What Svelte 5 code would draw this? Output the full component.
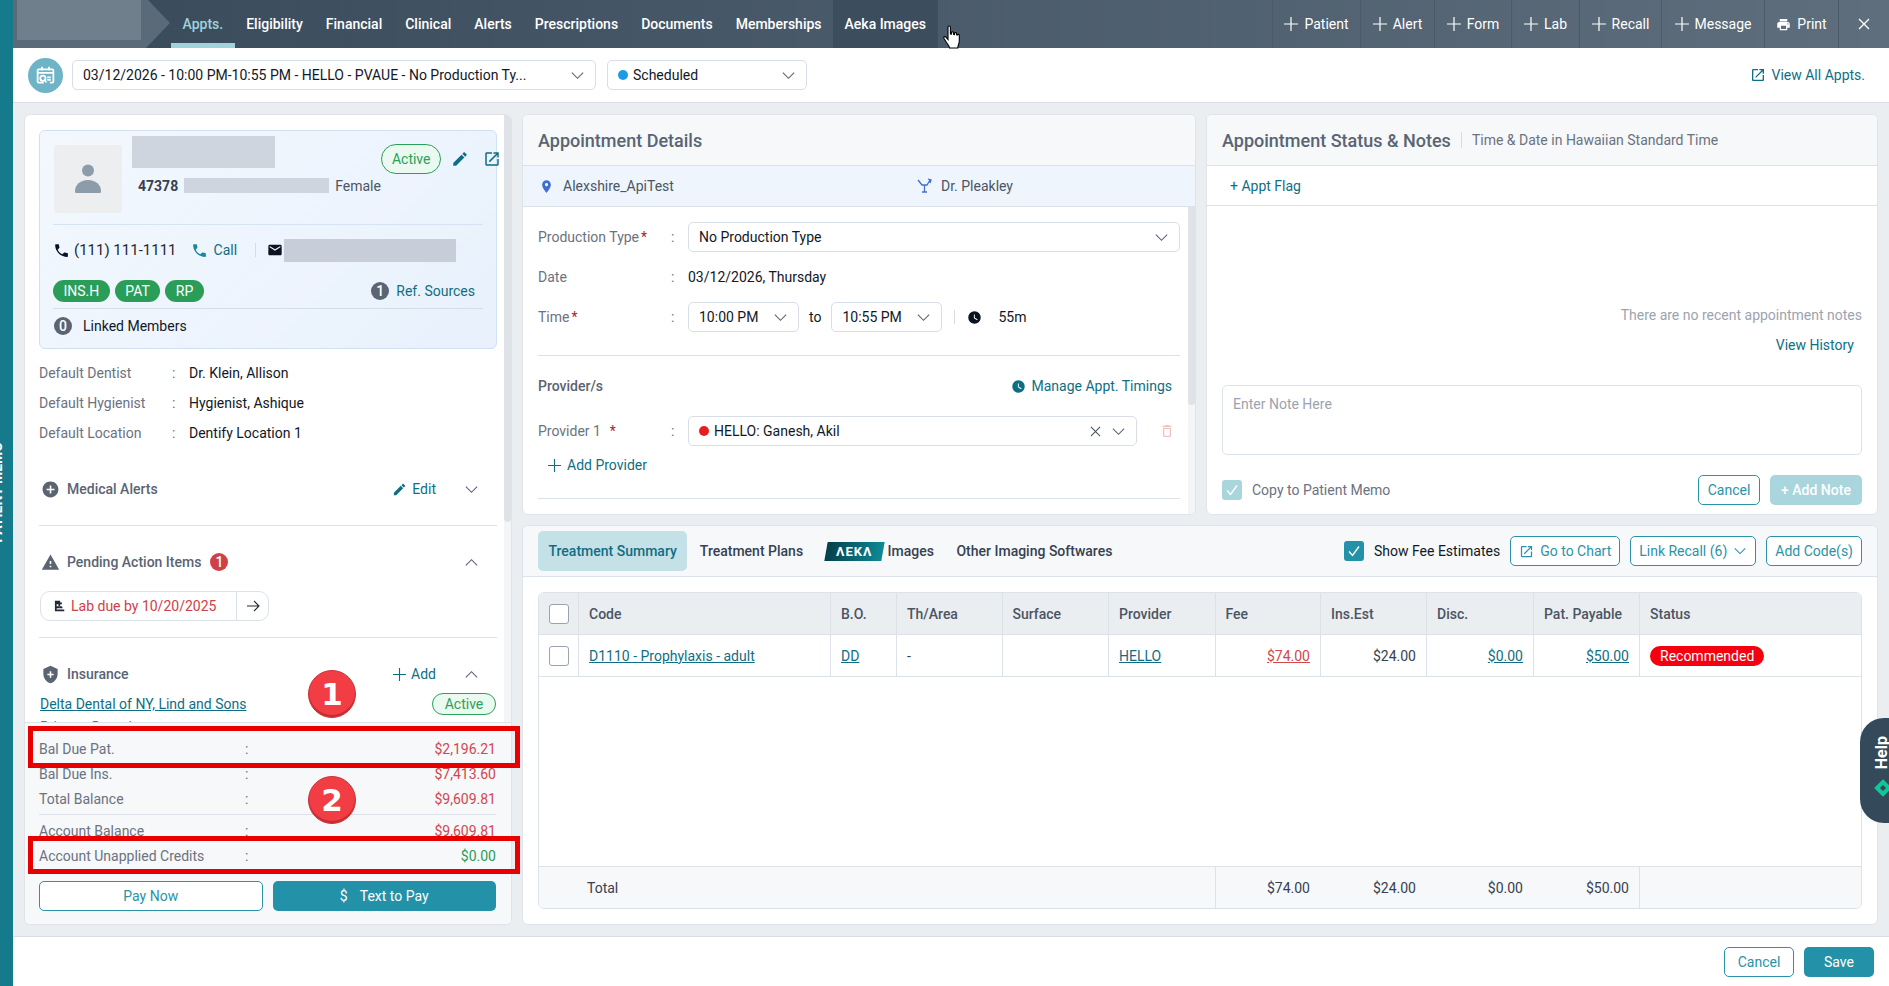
<script>
	const icons = {
		phone: 'M6.62 10.79c1.44 2.83 3.76 5.14 6.59 6.59l2.2-2.2c.27-.27.67-.36 1.02-.24 1.12.37 2.33.57 3.57.57.55 0 1 .45 1 1V20c0 .55-.45 1-1 1-9.39 0-17-7.61-17-17 0-.55.45-1 1-1h3.5c.55 0 1 .45 1 1 0 1.25.2 2.45.57 3.57.11.35.03.74-.25 1.02l-2.2 2.2z',
		edit: 'M3 17.25V21h3.75L17.81 9.94l-3.75-3.75L3 17.25zM20.71 7.04c.39-.39.39-1.02 0-1.41l-2.34-2.34c-.39-.39-1.02-.39-1.41 0l-1.83 1.83 3.75 3.75 1.83-1.83z',
		open: 'M19 19H5V5h7V3H5c-1.11 0-2 .9-2 2v14c0 1.1.89 2 2 2h14c1.1 0 2-.9 2-2v-7h-2v7zM14 3v2h3.59l-9.83 9.83 1.41 1.41L19 6.41V10h2V3h-7z',
		mail: 'M20 4H4c-1.1 0-1.99.9-1.99 2L2 18c0 1.1.9 2 2 2h16c1.1 0 2-.9 2-2V6c0-1.1-.9-2-2-2zm0 4l-8 5-8-5V6l8 5 8-5v2z',
		addCircle: 'M12 2C6.48 2 2 6.48 2 12s4.48 10 10 10 10-4.48 10-10S17.52 2 12 2zm5 11h-4v4h-2v-4H7v-2h4V7h2v4h4v2z',
		warning: 'M1 21h22L12 2 1 21zm12-3h-2v-2h2v2zm0-4h-2v-4h2v4z',
		shield: 'M12 1L3 5v6c0 5.55 3.84 10.74 9 12 5.16-1.26 9-6.45 9-12V5l-9-4zm4 12h-3v3h-2v-3H8v-2h3V8h2v3h3v2z',
		place: 'M12 2C8.13 2 5 5.13 5 9c0 5.25 7 13 7 13s7-7.75 7-13c0-3.87-3.13-7-7-7zm0 9.5c-1.38 0-2.5-1.12-2.5-2.5s1.12-2.5 2.5-2.5 2.5 1.12 2.5 2.5-1.12 2.5-2.5 2.5z',
		print: 'M19 8H5c-1.66 0-3 1.34-3 3v6h4v4h12v-4h4v-6c0-1.66-1.34-3-3-3zm-3 11H8v-5h8v5zm3-7c-.55 0-1-.45-1-1s.45-1 1-1 1 .45 1 1-.45 1-1 1zm-1-9H6v4h12V3z',
		clock: 'M12 2a10 10 0 1 0 0 20 10 10 0 0 0 0-20zm4.2 14.2L11 13V7h1.5v5.2l4.5 2.7-.8 1.3z',
		trash: 'M6 19c0 1.1.9 2 2 2h8c1.1 0 2-.9 2-2V7H6v12zM8 9h8v10H8V9zm7.5-5l-1-1h-5l-1 1H5v2h14V4z',
		lab: 'M5 3h9v3h3v3h-3v3h-3V9H8v3.5h7c1.5 0 3 .6 3 2.5v1H8v2h13v3H5V3z'
	};

	const navItems = ['Appts.', 'Eligibility', 'Financial', 'Clinical', 'Alerts', 'Prescriptions', 'Documents', 'Memberships', 'Aeka Images'];
	const tools = [
		{ label: 'Patient', w: 88 },
		{ label: 'Alert', w: 74 },
		{ label: 'Form', w: 77 },
		{ label: 'Lab', w: 68 },
		{ label: 'Recall', w: 82 },
		{ label: 'Message', w: 103 }
	];
	const defaults = [
		['Default Dentist', 'Dr. Klein, Allison'],
		['Default Hygienist', 'Hygienist, Ashique'],
		['Default Location', 'Dentify Location 1']
	];
	const heads = ['Code', 'B.O.', 'Th/Area', 'Surface', 'Provider', 'Fee', 'Ins.Est', 'Disc.', 'Pat. Payable', 'Status'];
</script>

{#snippet icon(d, size, color)}
	<svg class="ic" width={size} height={size} viewBox="0 0 24 24" fill={color}><path {d} /></svg>
{/snippet}

{#snippet chevron(size, color, up = false)}
	<svg class="ic" width={size} height={size} viewBox="0 0 16 16" fill="none" stroke={color} stroke-width="1.2">
		<path d={up ? 'M2 11l6-6 6 6' : 'M2 5l6 6 6-6'} />
	</svg>
{/snippet}

{#snippet plus(size, color)}
	<svg class="ic" width={size} height={size} viewBox="0 0 14 14" stroke={color} stroke-width="1.2"><path d="M7 0v14M0 7h14" /></svg>
{/snippet}

{#snippet check(color)}
	<svg width="20" height="20" viewBox="0 0 20 20" fill="none" stroke={color} stroke-width="1.4"><path d="M5 10.5l3.5 4L15 5.5" /></svg>
{/snippet}

<div class="app">
	<aside class="rail"><span class="rail-text">PATIENT MEMO</span></aside>

	<div class="page">
		<header class="topbar">
			<div class="brand"><div class="redact-brand"></div></div>
			<nav class="nav">
				{#each navItems as item, i}
					<span class="nav-item" class:active={i === 0} class:hover={i === 8}>{item}</span>
				{/each}
			</nav>
			<div class="tools">
				{#each tools as t}
					<span class="tool" style="width:{t.w}px">{@render plus(14, '#fff')}{t.label}</span>
				{/each}
				<span class="tool" style="width:74px">{@render icon(icons.print, 15, '#fff')}Print</span>
				<span class="tool" style="width:51px">
					<svg width="12" height="12" viewBox="0 0 12 12" stroke="#fff" stroke-width="1.3"><path d="M1 1l10 10M11 1L1 11" /></svg>
				</span>
			</div>
		</header>

		<div class="subbar">
			<div class="cal">
				<svg width="21" height="21" viewBox="0 0 24 24" fill="none" stroke="#fff" stroke-width="2">
					<path d="M10 20H4a1 1 0 0 1-1-1V6a1 1 0 0 1 1-1h16a1 1 0 0 1 1 1v13a1 1 0 0 1-1 1h-3" />
					<path d="M3 9h18M8 2v4M16 2v4M14 14h4M14 17h4" />
					<circle cx="9" cy="15" r="3" />
					<path d="M11 17l2 3" />
				</svg>
			</div>
			<div class="select appt-select">
				<span>03/12/2026 - 10:00 PM-10:55 PM - HELLO - PVAUE - No Production Ty...</span>
				{@render chevron(15, '#5b6472')}
			</div>
			<div class="select status-select">
				<span><i class="dot blue"></i>Scheduled</span>
				{@render chevron(15, '#5b6472')}
			</div>
			<a class="view-all">{@render icon(icons.open, 16, '#0f6e84')}View All Appts.</a>
		</div>

		<main class="main">
			<section class="panel left">
				<div class="left-top">
					<div class="left-content">
						<div class="card">
							<div class="card-head">
								<div class="avatar">
									<svg width="26" height="30" viewBox="0 0 26 30" fill="#8d9cab">
										<circle cx="13" cy="6.5" r="6" />
										<path d="M1.5 29c-1.5 0-1.5-1-1.5-2 0-6 5-11 13-11s13 5 13 11c0 1 0 2-1.5 2z" />
									</svg>
								</div>
								<div class="who">
									<div class="redact name-r"></div>
									<div class="id-row">
										<b>47378</b>
										<div class="redact id-r"></div>
										<span class="muted-dark">Female</span>
									</div>
								</div>
								<div class="head-actions">
									<span class="pill-active big">Active</span>
									{@render icon(icons.edit, 18, '#0f6e84')}
									{@render icon(icons.open, 18, '#0f6e84')}
								</div>
							</div>
							<div class="phone-row">
								{@render icon(icons.phone, 17, '#0b1220')}
								<span class="phone">(111) 111-1111</span>
								{@render icon(icons.phone, 17, '#1a86a0')}
								<a class="call">Call</a>
								<span class="vsep"></span>
								{@render icon(icons.mail, 16, '#0b1220')}
								<div class="redact mail-r"></div>
							</div>
							<div class="chip-row">
								<span class="chip">INS.H</span>
								<span class="chip">PAT</span>
								<span class="chip">RP</span>
								<span class="ref"><i class="count">1</i><a>Ref. Sources</a></span>
							</div>
							<div class="linked"><i class="count">0</i><span>Linked Members</span></div>
						</div>

						<div class="defaults">
							{#each defaults as [label, value]}
								<span class="lbl">{label}</span><span class="lbl">:</span><span class="val">{value}</span>
							{/each}
						</div>

						<div class="sec-row first">
							{@render icon(icons.addCircle, 19, '#5a6472')}
							<span class="sec-title">Medical Alerts</span>
							<a class="sec-action">{@render icon(icons.edit, 15, '#0f6e84')}Edit</a>
							{@render chevron(15, '#5a6472')}
						</div>
						<hr class="sec-rule" />

						<div class="sec-row">
							{@render icon(icons.warning, 19, '#5a6472')}
							<span class="sec-title">Pending Action Items</span>
							<i class="count red">1</i>
							<span class="sec-action"></span>
							{@render chevron(15, '#5a6472', true)}
						</div>
						<div class="lab-chip">
							<span class="lab-text">{@render icon(icons.lab, 14, '#1f2937')}Lab due by 10/20/2025</span>
							<span class="lab-go">
								<svg width="14" height="12" viewBox="0 0 14 12" fill="none" stroke="#1f2937" stroke-width="1.1"><path d="M1 6h12M8 1l5 5-5 5" /></svg>
							</span>
						</div>
						<hr class="sec-rule lab-rule" />

						<div class="sec-row">
							{@render icon(icons.shield, 19, '#5a6472')}
							<span class="sec-title">Insurance</span>
							<a class="sec-action">{@render plus(13, '#0f6e84')}Add</a>
							{@render chevron(15, '#5a6472', true)}
						</div>
						<div class="ins-row">
							<a class="ulink">Delta Dental of NY, Lind and Sons</a>
							<span class="pill-active">Active</span>
						</div>
						<div class="clipped">Primary Dental</div>
					</div>
					<div class="scroll"><div class="thumb"></div></div>
				</div>

				<div class="left-foot">
					<div class="bal"><span>Bal Due Pat.</span><span>:</span><span class="red-v">$2,196.21</span></div>
					<div class="bal"><span>Bal Due Ins.</span><span>:</span><span class="red-v">$7,413.60</span></div>
					<div class="bal"><span>Total Balance</span><span>:</span><span class="red-v">$9,609.81</span></div>
					<hr class="foot-rule" />
					<div class="bal"><span>Account Balance</span><span>:</span><span class="red-v">$9,609.81</span></div>
					<div class="bal"><span>Account Unapplied Credits</span><span>:</span><span class="green-v">$0.00</span></div>
					<div class="pay-row">
						<button class="btn outline">Pay Now</button>
						<button class="btn solid"><span class="dollar">$</span>Text to Pay</button>
					</div>
				</div>
			</section>

			<div class="right-col">
				<div class="upper">
					<section class="panel details">
						<div class="panel-head"><h2>Appointment Details</h2></div>
						<div class="loc-row">
							<span class="loc">{@render icon(icons.place, 15, '#3f6fd1')}Alexshire_ApiTest</span>
							<span class="doc">
								<svg class="ic" width="16" height="16" viewBox="0 0 16 16" fill="none" stroke="#3f6fd1" stroke-width="1.3"><path d="M1 2l4 5h5l3-5M7.5 7v7M5 14h5M11 1l3 1-1 3" /></svg>
								Dr. Pleakley
							</span>
						</div>
						<div class="details-body">
							<div class="details-form">
								<div class="form-row">
									<span class="lbl">Production Type<em>*</em></span><span class="lbl">:</span>
									<div class="select grow"><span>No Production Type</span>{@render chevron(15, '#5b6472')}</div>
								</div>
								<div class="form-row">
									<span class="lbl">Date</span><span class="lbl">:</span>
									<span class="val">03/12/2026, Thursday</span>
								</div>
								<div class="form-row">
									<span class="lbl">Time<em>*</em></span><span class="lbl">:</span>
									<div class="time-group">
										<div class="select time"><span>10:00 PM</span>{@render chevron(15, '#5b6472')}</div>
										<span class="val">to</span>
										<div class="select time"><span>10:55 PM</span>{@render chevron(15, '#5b6472')}</div>
										<span class="vsep"></span>
										{@render icon(icons.clock, 15, '#0b1220')}
										<span class="val dur">55m</span>
									</div>
								</div>
								<hr class="sec-rule time-rule" />
								<div class="prov-head">
									<span class="prov-title">Provider/s</span>
									<a class="manage">{@render icon(icons.clock, 15, '#0f6e84')}Manage Appt. Timings</a>
								</div>
								<div class="form-row">
									<span class="lbl">Provider 1 &nbsp;<em>*</em></span><span class="lbl">:</span>
									<div class="select provider">
										<span><i class="dot redd"></i>HELLO: Ganesh, Akil</span>
										<span class="sel-end">
											<svg width="11" height="11" viewBox="0 0 12 12" stroke="#4b5563" stroke-width="1.2"><path d="M1 1l10 10M11 1L1 11" /></svg>
											{@render chevron(15, '#5b6472')}
										</span>
									</div>
									<span class="trash">{@render icon(icons.trash, 16, '#f3c2c2')}</span>
								</div>
								<a class="add-prov">{@render plus(13, '#0f6e84')}Add Provider</a>
								<hr class="sec-rule prov-rule" />
							</div>
							<div class="scroll"><div class="thumb small"></div></div>
						</div>
					</section>

					<section class="panel notes">
						<div class="panel-head">
							<h2>Appointment Status &amp; Notes</h2>
							<span class="tz">Time &amp; Date in Hawaiian Standard Time</span>
						</div>
						<div class="flag-row"><a>+ Appt Flag</a></div>
						<div class="notes-body">
							<p class="empty">There are no recent appointment notes</p>
							<a class="history">View History</a>
							<div class="note-box">Enter Note Here</div>
							<div class="note-foot">
								<span class="box light">{@render check('#fff')}</span>
								<span class="copy">Copy to Patient Memo</span>
								<button class="btn outline note-cancel">Cancel</button>
								<button class="btn faded">+ Add Note</button>
							</div>
						</div>
					</section>
				</div>

				<section class="panel treat">
					<div class="treat-head">
						<span class="tab on">Treatment Summary</span>
						<span class="tab">Treatment Plans</span>
						<span class="tab aeka"><span class="aeka-logo"><span>ΛEKΛ</span></span>Images</span>
						<span class="tab">Other Imaging Softwares</span>
						<div class="treat-tools">
							<span class="box solid-box">{@render check('#fff')}</span>
							<span class="fee-label">Show Fee Estimates</span>
							<button class="btn outline small-btn">{@render icon(icons.open, 15, '#2a93a8')}Go to Chart</button>
							<button class="btn outline small-btn">Link Recall (6){@render chevron(14, '#2a93a8')}</button>
							<button class="btn outline small-btn">Add Code(s)</button>
						</div>
					</div>

					<div class="table">
						<div class="tr th">
							<span class="cell"><i class="cb"></i></span>
							{#each heads as h}<span class="cell">{h}</span>{/each}
						</div>
						<div class="tr td">
							<span class="cell"><i class="cb"></i></span>
							<span class="cell"><a class="ulink">D1110 - Prophylaxis - adult</a></span>
							<span class="cell"><a class="ulink">DD</a></span>
							<span class="cell">-</span>
							<span class="cell"></span>
							<span class="cell"><a class="ulink">HELLO</a></span>
							<span class="cell num"><a class="ulink redlink">$74.00</a></span>
							<span class="cell num">$24.00</span>
							<span class="cell num"><a class="ulink">$0.00</a></span>
							<span class="cell num"><a class="ulink">$50.00</a></span>
							<span class="cell"><span class="rec">Recommended</span></span>
						</div>
						<div class="spacer"></div>
						<div class="tr tot">
							<span class="cell total-label">Total</span>
							<span class="cell num">$74.00</span>
							<span class="cell num nb">$24.00</span>
							<span class="cell num nb">$0.00</span>
							<span class="cell num nb">$50.00</span>
							<span class="cell"></span>
						</div>
					</div>
				</section>
			</div>
		</main>

		<footer class="footer">
			<button class="btn outline foot-btn">Cancel</button>
			<button class="btn solid foot-btn">Save</button>
		</footer>
	</div>

	<!-- annotations drawn over the screenshot -->
	<div class="mark box1"></div>
	<div class="mark box2"></div>
	<div class="badge b1">1</div>
	<div class="badge b2">2</div>

	<svg class="cursor" width="18" height="24" viewBox="0 0 18 24" fill="#fff" stroke="#000" stroke-width="1.1">
		<path d="M5 2c0-1.4 2.4-1.4 2.4 0v7l1 .1V7.7c0-1.2 2.1-1.2 2.1 0v1.6l1 .2V8.400c0-1.200 2.100-1.200 2.100 0v1.500l.8.200c0-1 1.900-1 1.900.3V16c0 3-1.500 4-1.500 7H6.500c0-2-1.500-3.500-3-5.500L1 13.500c-.8-1.500 1-2.500 2-1.300L5 14.500z" />
	</svg>

	<div class="help">
		<span class="help-text">Help</span>
		<svg class="help-mark" width="18" height="18" viewBox="0 0 18 18" fill="none" stroke="#10c79a" stroke-width="4"><path d="M9 3l6 6-6 6-6-6z" /></svg>
	</div>
</div>

<style>
	:global(body) {
		margin: 0;
		overflow: hidden;
		background: #fff;
	}

	.app {
		display: flex;
		position: relative;
		width: 1889px;
		height: 986px;
		overflow: hidden;
		font-family: Roboto, 'Liberation Sans', sans-serif;
		font-size: 14px;
		color: #1f2937;
	}

	a {
		color: #0f6e84;
	}

	hr {
		border: 0;
		margin: 0;
		height: 1px;
		background: #dde1e8;
	}

	.ic {
		flex: none;
		display: block;
	}

	.rail {
		position: relative;
		flex: none;
		width: 13px;
		background: #157a8c;
		overflow: hidden;
	}

	.rail-text {
		position: absolute;
		left: -11px;
		top: 442px;
		writing-mode: vertical-rl;
		transform: rotate(180deg);
		color: #fff;
		font-weight: 700;
		font-size: 14px;
		white-space: nowrap;
	}

	.page {
		flex: 1;
		min-width: 0;
		display: flex;
		flex-direction: column;
	}

	/* top bar */
	.topbar {
		flex: none;
		display: flex;
		height: 48px;
		background: linear-gradient(90deg, #38495a, #5e6e7d);
		color: #fff;
	}

	.brand {
		flex: none;
		width: 157px;
		background: #5a6a79;
		clip-path: polygon(0 0, 135px 0, 157px 23px, 133px 100%, 0 100%);
	}

	.redact-brand {
		width: 124px;
		height: 40px;
		margin-left: 4px;
		background: #6f7f8c;
	}

	.nav {
		display: flex;
		margin-left: 1px;
	}

	.nav-item {
		display: flex;
		align-items: center;
		padding: 0 11.5px;
		font-weight: 500;
		border-bottom: 3px solid transparent;
		padding-top: 3px;
		box-sizing: border-box;
	}

	.nav-item.active {
		color: #9fd3dc;
		border-bottom: 5px solid #9fd3dc;
		padding-top: 5px;
	}

	.nav-item.hover {
		background: #3c4d5e;
	}

	.tools {
		display: flex;
		margin-left: auto;
	}

	.tool {
		display: flex;
		align-items: center;
		justify-content: center;
		gap: 6px;
		box-sizing: border-box;
		border-left: 1px solid #4a5a69;
	}

	/* second bar */
	.subbar {
		flex: none;
		display: flex;
		align-items: center;
		height: 54px;
		padding: 0 24px 0 15px;
		gap: 11px;
		border-bottom: 1px solid #d8dde3;
	}

	.cal {
		display: flex;
		align-items: center;
		justify-content: center;
		width: 35px;
		height: 35px;
		margin-right: -2px;
		border-radius: 50%;
		background: #6fb4c6;
	}

	.select {
		display: flex;
		align-items: center;
		justify-content: space-between;
		box-sizing: border-box;
		height: 30px;
		padding: 0 10px;
		background: #fff;
		border: 1px solid #d8dde6;
		border-radius: 5px;
		color: #111827;
		white-space: nowrap;
	}

	.appt-select {
		width: 524px;
	}

	.status-select {
		width: 200px;
	}

	.dot {
		display: inline-block;
		width: 10px;
		height: 10px;
		margin-right: 5px;
		border-radius: 50%;
	}

	.dot.blue {
		background: #1a9be8;
	}

	.dot.redd {
		background: #e61e1e;
	}

	.view-all {
		display: flex;
		align-items: center;
		gap: 5px;
		margin-left: auto;
	}

	/* main area */
	.main {
		flex: 1;
		min-height: 0;
		display: flex;
		gap: 10px;
		padding: 11px 11px 11px 11px;
		background: #ebeef1;
		border-bottom: 1px solid #d8dde3;
	}

	.panel {
		box-sizing: border-box;
		background: #fff;
		border: 1px solid #e0e4ea;
		border-radius: 6px;
		overflow: hidden;
	}

	.left {
		flex: none;
		width: 488px;
		display: flex;
		flex-direction: column;
	}

	.left-top {
		flex: 1;
		min-height: 0;
		display: flex;
		overflow: hidden;
	}

	.left-content {
		flex: 1;
		min-width: 0;
		padding: 15px 7px 0 14px;
	}

	.scroll {
		flex: none;
		width: 7px;
		background: #f4f5f7;
	}

	.thumb {
		height: 407px;
		background: #dfe3e7;
		border-radius: 0 0 4px 4px;
	}

	.thumb.small {
		height: 198px;
	}

	.card {
		box-sizing: border-box;
		height: 219px;
		padding: 0 13px;
		background: linear-gradient(135deg, #f3f8fe, #e8f1fc);
		border: 1px solid #cfe0f5;
		border-radius: 6px;
	}

	.card-head {
		display: flex;
		height: 93px;
		border-bottom: 1px solid #d5e3f3;
	}

	.avatar {
		flex: none;
		display: flex;
		align-items: center;
		justify-content: center;
		width: 68px;
		height: 68px;
		margin: 14px 10px 0 1px;
		border-radius: 4px;
		background: #eceef0;
	}

	.who {
		padding-top: 5px;
	}

	.redact {
		background: #cfd5de;
	}

	.name-r {
		width: 143px;
		height: 32px;
	}

	.id-row {
		display: flex;
		align-items: center;
		gap: 6px;
		height: 15px;
		margin: 10px 0 0 6px;
	}

	.id-row b {
		font-weight: 700;
		color: #374151;
	}

	.id-r {
		width: 145px;
		height: 15px;
	}

	.muted-dark {
		color: #4b5563;
	}

	.head-actions {
		display: flex;
		align-items: center;
		gap: 14px;
		height: 30px;
		margin: 13px 0 0 auto;
		padding-right: 13px;
	}

	.pill-active {
		display: inline-flex;
		align-items: center;
		box-sizing: border-box;
		height: 22px;
		padding: 0 10px;
		color: #2aa05a;
		background: #eafaf0;
		border: 1px solid #2aa05a;
		border-radius: 12px;
	}

	.pill-active.big {
		height: 30px;
		padding: 0 10px;
		border-radius: 15px;
		margin-right: -4px;
	}

	.phone-row {
		display: flex;
		align-items: center;
		height: 50px;
	}

	.phone {
		margin: 0 14px 0 4px;
		font-size: 15px;
	}

	.call {
		margin-left: 6px;
	}

	.vsep {
		width: 1px;
		height: 14px;
		background: #d5dbe3;
	}

	.phone-row .vsep {
		margin: 0 11px 0 18px;
	}

	.mail-r {
		width: 172px;
		height: 23px;
		background: #c8ced9;
		margin-left: 1px;
	}

	.chip-row {
		display: flex;
		align-items: center;
		gap: 5px;
		height: 32px;
		margin-bottom: 3px;
		border-bottom: 1px solid #d5dde8;
		padding-bottom: 1px;
	}

	.chip {
		display: flex;
		align-items: center;
		height: 22px;
		padding: 0 10.500px;
		color: #fff;
		background: #2a9d58;
		border-radius: 11px;
		font-weight: 400;
	}

	.ref {
		display: flex;
		align-items: center;
		gap: 7px;
		margin-left: auto;
		padding-right: 8px;
	}

	.count {
		display: inline-flex;
		align-items: center;
		justify-content: center;
		width: 18px;
		height: 18px;
		border-radius: 50%;
		background: #5a6472;
		color: #fff;
		font-style: normal;
		font-size: 14px;
		font-weight: 500;
	}

	.count.red {
		background: #cf4146;
		margin-left: 4px;
	}

	.linked {
		display: flex;
		align-items: center;
		gap: 11px;
		height: 28px;
		padding-left: 1px;
		color: #111827;
	}

	.defaults {
		display: grid;
		grid-template-columns: 133px 17px 1fr;
		grid-auto-rows: 30px;
		align-items: center;
		margin-top: 9px;
	}

	.lbl {
		color: #6b7280;
	}

	.lbl em {
		color: #b32028;
		font-style: normal;
		margin-left: 2px;
	}

	.val {
		color: #111827;
	}

	.sec-row {
		display: flex;
		align-items: center;
		gap: 5px;
		height: 34px;
		margin-top: 19px;
		padding: 0 18px 0 2px;
	}

	.sec-row.first {
		margin-top: 24px;
	}

	.sec-title {
		font-weight: 500;
		color: #5a6472;
		margin-left: 2px;
	}

	.sec-action {
		display: flex;
		align-items: center;
		gap: 5px;
		margin: 0 23px 0 auto;
	}

	.sec-rule {
		margin-top: 19px;
	}

	.lab-chip {
		display: inline-flex;
		box-sizing: border-box;
		width: 229px;
		height: 30px;
		margin: 12px 0 0 1px;
		border: 1px solid #dde1e8;
		border-radius: 10px;
	}

	.lab-text {
		display: flex;
		align-items: center;
		gap: 5px;
		padding: 0 10px 0 11px;
		color: #cf4146;
		white-space: nowrap;
		border-right: 1px solid #dde1e8;
		flex: 1;
	}

	.lab-go {
		display: flex;
		align-items: center;
		justify-content: center;
		width: 31px;
	}

	.lab-rule {
		margin-top: 16px;
	}

	.ins-row {
		display: flex;
		align-items: center;
		justify-content: space-between;
		height: 25px;
		padding-left: 1px;
	}

	.ins-row .pill-active {
		width: 64px;
		justify-content: center;
		padding: 0;
		margin-right: 1px;
	}

	.ulink {
		color: #0f6e84;
		text-decoration: underline;
	}

	.redlink {
		color: #d2474c;
	}

	.clipped {
		padding-left: 1px;
		margin-top: 3px;
		color: #6b7280;
	}

	.left-foot {
		flex: none;
		box-sizing: border-box;
		height: 202px;
		padding: 13px 15px 0 14px;
		background: #f6f8fa;
		border-top: 1px solid #dde1e8;
	}

	.bal {
		display: grid;
		grid-template-columns: 206px 1fr auto;
		align-items: center;
		height: 25px;
		color: #6b7280;
	}

	.red-v {
		color: #d2474c;
	}

	.green-v {
		color: #2a9d58;
	}

	.foot-rule {
		margin: 3px 0 3px;
	}

	.pay-row {
		display: grid;
		grid-template-columns: 1fr 1fr;
		gap: 10px;
		margin-top: 13px;
	}

	.btn {
		display: inline-flex;
		align-items: center;
		justify-content: center;
		gap: 6px;
		box-sizing: border-box;
		height: 30px;
		padding: 0 6px;
		font: inherit;
		border-radius: 5px;
		white-space: nowrap;
	}

	.btn.outline {
		color: #2a93a8;
		background: #fff;
		border: 1px solid #2a93a8;
	}

	.btn.solid {
		color: #fff;
		background: #2392a8;
		border: 0;
	}

	.btn.faded {
		width: 92px;
		font-weight: 500;
		color: #fff;
		background: #a9d5dd;
		border: 0;
	}

	.dollar {
		margin-right: 6px;
	}

	/* right side */
	.right-col {
		flex: 1;
		min-width: 0;
		display: flex;
		flex-direction: column;
		gap: 10px;
	}

	.upper {
		flex: none;
		display: flex;
		height: 401px;
		gap: 10px;
	}

	.details {
		flex: none;
		width: 674px;
		display: flex;
		flex-direction: column;
	}

	.notes {
		flex: 1;
		min-width: 0;
		display: flex;
		flex-direction: column;
	}

	.panel-head {
		flex: none;
		display: flex;
		align-items: center;
		box-sizing: border-box;
		height: 51px;
		padding: 0 15px;
		background: #f6f8fa;
		border-bottom: 1px solid #dde1e8;
	}

	h2 {
		margin: 0;
		font-size: 18px;
		font-weight: 500;
		color: #5a6472;
	}

	.tz {
		margin-left: 10px;
		padding-left: 10px;
		border-left: 1px solid #d5dbe3;
		color: #6b7280;
		line-height: 16px;
	}

	.loc-row {
		flex: none;
		display: flex;
		align-items: center;
		box-sizing: border-box;
		height: 41px;
		padding-left: 16px;
		background: #eef5fd;
		border-bottom: 1px solid #dde1e8;
		color: #4b5563;
	}

	.loc {
		display: flex;
		align-items: center;
		gap: 9px;
		width: 378px;
	}

	.doc {
		display: flex;
		align-items: center;
		gap: 8px;
	}

	.details-body {
		flex: 1;
		min-height: 0;
		display: flex;
		overflow: hidden;
	}

	.details-form {
		flex: 1;
		min-width: 0;
		padding: 15px 8px 0 15px;
	}

	.form-row {
		display: grid;
		grid-template-columns: 133px 17px 1fr auto;
		align-items: center;
		height: 30px;
		margin-bottom: 10px;
	}

	.form-row .grow {
		grid-column: 3 / 5;
	}

	.time-group {
		display: flex;
		align-items: center;
		gap: 10px;
	}

	.time-group .vsep {
		margin: 0 2px;
	}

	.select.time {
		width: 111px;
	}

	.dur {
		margin-left: 6px;
	}

	.time-rule {
		margin-top: 23px;
	}

	.prov-head {
		display: flex;
		align-items: center;
		justify-content: space-between;
		height: 30px;
		margin: 15px 8px 15px 0;
	}

	.prov-title {
		font-weight: 500;
		color: #5a6472;
	}

	.manage {
		display: flex;
		align-items: center;
		gap: 5px;
	}

	.sel-end {
		display: flex;
		align-items: center;
		gap: 10px;
	}

	.select.provider {
		width: 449px;
	}

	.trash {
		margin: 0 5px 0 20px;
	}

	.add-prov {
		display: flex;
		align-items: center;
		gap: 6px;
		height: 28px;
		padding-left: 10px;
		margin-top: -5px;
	}

	.prov-rule {
		margin-top: 19px;
	}

	.flag-row {
		flex: none;
		display: flex;
		align-items: center;
		box-sizing: border-box;
		height: 40px;
		padding-left: 23px;
		border-bottom: 1px solid #dde1e8;
	}

	.notes-body {
		flex: 1;
		min-height: 0;
		display: flex;
		flex-direction: column;
		align-items: flex-end;
		padding: 0 15px;
	}

	.empty {
		margin: 99px 0 0;
		line-height: 20px;
		color: #9ca3af;
	}

	.history {
		margin: 10px 8px 0 0;
		line-height: 20px;
	}

	.note-box {
		box-sizing: border-box;
		align-self: stretch;
		height: 70px;
		margin-top: 30px;
		padding: 10px;
		border: 1px solid #dde1e8;
		border-radius: 5px;
		color: #9ca3af;
	}

	.note-foot {
		align-self: stretch;
		display: flex;
		align-items: center;
		margin-top: 20px;
		gap: 10px;
	}

	.box {
		display: block;
		width: 20px;
		height: 20px;
		border-radius: 3px;
	}

	.box.light {
		background: #a9d5dd;
	}

	.box.solid-box {
		flex: none;
		background: #2392a8;
	}

	.copy {
		color: #6b7280;
		margin-right: auto;
	}

	.note-cancel {
		width: 62px;
	}

	.treat {
		flex: 1;
		min-height: 0;
		display: flex;
		flex-direction: column;
	}

	.treat-head {
		flex: none;
		display: flex;
		align-items: center;
		box-sizing: border-box;
		height: 51px;
		padding: 0 15px;
		gap: 2px;
		background: #f6f8fa;
		border-bottom: 1px solid #dde1e8;
	}

	.tab {
		display: flex;
		align-items: center;
		height: 40px;
		padding: 0 10.500px;
		border-radius: 5px;
		font-weight: 500;
		color: #374151;
	}

	.tab.on {
		color: #0f6e84;
		background: #c3e1e7;
	}

	.tab.aeka {
		margin-left: 10px;
		gap: 5px;
		padding: 0;
		margin-right: 10px;
	}

	.aeka-logo {
		display: flex;
		align-items: center;
		justify-content: center;
		width: 57px;
		height: 19px;
		background: linear-gradient(90deg, #053f4a, #0e8a96);
		transform: skewX(-10deg);
		color: #fff;
		font-size: 13px;
		font-weight: 700;
		letter-spacing: 1px;
	}

	.aeka-logo span {
		transform: skewX(10deg);
	}

	.treat-tools {
		display: flex;
		align-items: center;
		gap: 10px;
		margin-left: auto;
	}

	.fee-label {
		color: #111827;
		margin-right: 0;
	}

	.small-btn {
		height: 30px;
		padding: 0 8px;
	}

	.table {
		flex: 1;
		min-height: 0;
		display: flex;
		flex-direction: column;
		margin: 15px 15px 15px;
		border: 1px solid #dde1e8;
		border-radius: 6px;
		overflow: hidden;
	}

	.tr {
		flex: none;
		display: grid;
		grid-template-columns: 39px 252px 66px 105.500px 106.500px 106.500px 105.500px 106px 107px 106px 1fr;
		height: 41px;
		border-bottom: 1px solid #dde1e8;
	}

	.cell {
		display: flex;
		align-items: center;
		padding: 0 10px;
		border-left: 1px solid #dde1e8;
		color: #374151;
		min-width: 0;
		white-space: nowrap;
	}

	.cell:first-child {
		border-left: 0;
	}

	.th {
		background: #ebeef1;
	}

	.th .cell {
		font-weight: 500;
		color: #4b5563;
	}

	.num {
		justify-content: flex-end;
	}

	.cb {
		display: block;
		flex: none;
		box-sizing: border-box;
		width: 20px;
		height: 20px;
		margin-left: 0;
		background: #fff;
		border: 1px solid #9aa3af;
		border-radius: 3px;
	}

	.rec {
		padding: 1px 10px;
		color: #fff;
		background: #f5000f;
		border-radius: 10px;
		line-height: 18px;
	}

	.spacer {
		flex: 1;
	}

	.tot {
		background: #f6f8fa;
		border-top: 1px solid #dde1e8;
		border-bottom: 0;
	}

	.total-label {
		grid-column: 1 / 7;
		padding-left: 48px;
	}

	.nb {
		border-left: 0;
	}

	.footer {
		flex: none;
		display: flex;
		align-items: center;
		justify-content: flex-end;
		gap: 10px;
		height: 49px;
		padding: 0 15px;
	}

	.foot-btn {
		width: 70px;
	}

	/* overlays */
	.mark {
		position: absolute;
		left: 28px;
		width: 492px;
		box-sizing: border-box;
		border: 5px solid #e80000;
	}

	.box1 {
		top: 726px;
		height: 42px;
	}

	.box2 {
		top: 836px;
		height: 38px;
	}

	.badge {
		position: absolute;
		left: 308px;
		display: flex;
		align-items: center;
		justify-content: center;
		width: 48px;
		height: 48px;
		border-radius: 50%;
		background: #f23d44;
		box-shadow: inset 0 -2px 0 #c42c32;
		border: 1px solid #c9343a;
		box-sizing: border-box;
		color: #fff;
		font-family: 'DejaVu Sans', sans-serif;
		font-size: 31px;
		font-weight: 700;
	}

	.b1 {
		top: 670px;
	}

	.b2 {
		top: 776px;
	}

	.cursor {
		position: absolute;
		left: 943px;
		top: 25px;
	}

	.help {
		position: absolute;
		right: 0;
		top: 718px;
		display: flex;
		flex-direction: column;
		align-items: flex-start;
		box-sizing: border-box;
		width: 29px;
		height: 105px;
		padding: 18px 0 0 13px;
		background: #34495a;
		border-radius: 24px 0 0 24px;
		overflow: hidden;
	}

	.help-text {
		writing-mode: vertical-rl;
		transform: rotate(180deg);
		color: #fff;
		font-size: 16px;
		font-weight: 700;
		line-height: 18px;
	}

	.help-mark {
		flex: none;
		margin: 10px 0 0 1px;
	}
</style>
